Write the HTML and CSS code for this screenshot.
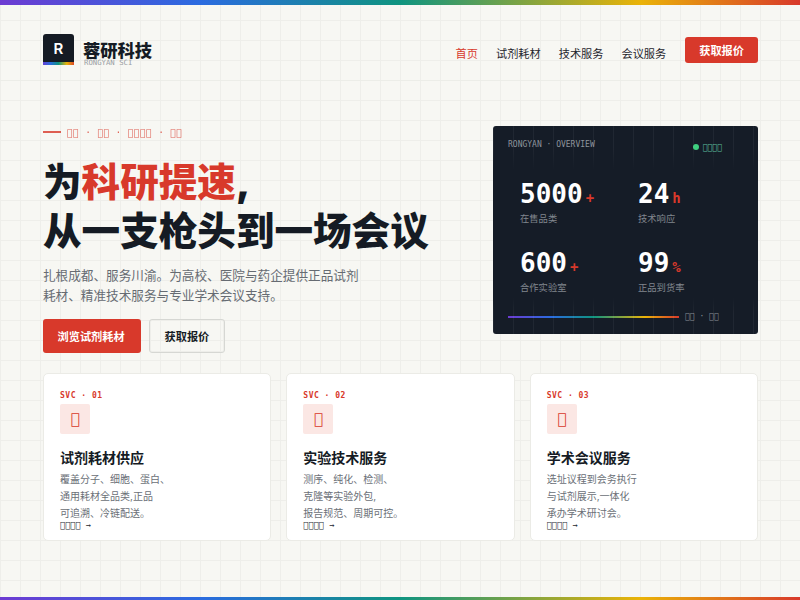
FILE: index.html
```html
<!DOCTYPE html>
<html lang="zh-CN">

<head>
    <meta charset="UTF-8">
    <meta name="viewport" content="width=device-width, initial-scale=1.0">
    <title>蓉研科技</title>
    <link rel="stylesheet" href="styles.css">
</head>

<body>
    <div class="topbar"></div>
    <header class="header">
        <div class="brand">
            <div class="logo"><span>R</span></div>
            <div class="brandtext">
                <div class="brandname">蓉研科技</div>
                <div class="brandsub">RONGYAN SCI</div>
            </div>
        </div>
        <nav class="nav">
            <a class="navlink active">首页</a>
            <a class="navlink">试剂耗材</a>
            <a class="navlink">技术服务</a>
            <a class="navlink">会议服务</a>
            <a class="navbtn">获取报价</a>
        </nav>
    </header>

    <section class="hero">
        <div class="heroleft">
            <div class="eyebrow"><span class="eyebrowline"></span><span>&#xE000;&#xE000; · &#xE000;&#xE000; · &#xE000;&#xE000;&#xE000;&#xE000; · &#xE000;&#xE000;</span></div>
            <h1 class="title">为<em>科研提速</em>,<br>从一支枪头到一场会议</h1>
            <p class="lead">扎根成都、服务川渝。为高校、医院与药企提供正品试剂<br>耗材、精准技术服务与专业学术会议支持。</p>
            <div class="actions">
                <a class="btn btnprimary">浏览试剂耗材</a>
                <a class="btn btnghost">获取报价</a>
            </div>
        </div>
        <aside class="panel">
            <div class="panelhead">
                <span class="paneltitle">RONGYAN · OVERVIEW</span>
                <span class="panelstatus"><i class="statusdot"></i><span class="statustext">&#xE000;&#xE000;&#xE000;&#xE000;</span></span>
            </div>
            <div class="stats">
                <div class="stat">
                    <div class="statnum">5000<small>+</small></div>
                    <div class="statlabel">在售品类</div>
                </div>
                <div class="stat">
                    <div class="statnum">24<small>h</small></div>
                    <div class="statlabel">技术响应</div>
                </div>
                <div class="stat">
                    <div class="statnum">600<small>+</small></div>
                    <div class="statlabel">合作实验室</div>
                </div>
                <div class="stat">
                    <div class="statnum">99<small>%</small></div>
                    <div class="statlabel">正品到货率</div>
                </div>
            </div>
            <div class="panelfoot">
                <span class="rainbowline"></span>
                <span class="footnote">&#xE000;&#xE000; · &#xE000;&#xE000;</span>
            </div>
        </aside>
    </section>

    <section class="cards">
        <div class="card">
            <div class="svc">SVC · 01</div>
            <div class="cardicon">&#xE000;</div>
            <h3 class="cardtitle">试剂耗材供应</h3>
            <p class="carddesc">覆盖分子、细胞、蛋白、<br>通用耗材全品类,正品<br>可追溯、冷链配送。</p>
            <a class="cardlink">&#xE000;&#xE000;&#xE000;&#xE000; →</a>
        </div>
        <div class="card">
            <div class="svc">SVC · 02</div>
            <div class="cardicon">&#xE000;</div>
            <h3 class="cardtitle">实验技术服务</h3>
            <p class="carddesc">测序、纯化、检测、<br>克隆等实验外包,<br>报告规范、周期可控。</p>
            <a class="cardlink">&#xE000;&#xE000;&#xE000;&#xE000; →</a>
        </div>
        <div class="card">
            <div class="svc">SVC · 03</div>
            <div class="cardicon">&#xE000;</div>
            <h3 class="cardtitle">学术会议服务</h3>
            <p class="carddesc">选址议程到会务执行<br>与试剂展示,一体化<br>承办学术研讨会。</p>
            <a class="cardlink">&#xE000;&#xE000;&#xE000;&#xE000; →</a>
        </div>
    </section>
    <div class="bottombar"></div>
</body>

</html>
```

FILE: styles.css
```css
* {
    margin: 0;
    padding: 0;
    box-sizing: border-box;
}

body {
    width: 800px;
    height: 600px;
    overflow: hidden;
    display: flex;
    flex-direction: column;
    font-family: "Inter", "Noto Sans CJK SC", sans-serif;
    color: #151b24;
    background-color: #f7f7f3;
    background-image: linear-gradient(#eeeeea 1px, transparent 1px), linear-gradient(90deg, #eeeeea 1px, transparent 1px);
    background-size: 20px 20px;
}

.topbar,
.bottombar,
.rainbowline {
    background-image: linear-gradient(90deg, #6d3bd2, #2b6be0 25%, #0f9480 50%, #eab308 80%, #d8392b);
}

.topbar {
    height: 5px;
}

.bottombar {
    height: 3px;
    margin-top: auto;
}

.header {
    height: 76px;
    padding: 14px 42px 0 43px;
    display: flex;
    justify-content: space-between;
    align-items: center;
    border-bottom: 1px solid #ecede8;
}

.brand {
    display: flex;
    align-items: center;
    gap: 9px;
}

.logo {
    width: 31px;
    height: 31px;
    border-radius: 3px 3px 0 0;
    display: flex;
    justify-content: center;
    align-items: center;
    color: #fff;
    font-size: 15px;
    font-weight: 600;
    background-color: #151b24;
    border-bottom: 3px solid;
    border-image: linear-gradient(90deg, #6d3bd2, #2b6be0, #0f9480, #eab308, #d8392b) 1;
}

.brandtext {
    height: 31px;
    padding-top: 6px;
}

.brandname {
    font-size: 17.3px;
    font-weight: 800;
    line-height: 22px;
}

.brandsub {
    margin-top: -3px;
    margin-left: 1px;
    font-family: "DejaVu Sans Mono", monospace;
    font-size: 7.3px;
    line-height: 8px;
    color: #9a9ea3;
}

.nav {
    display: flex;
    align-items: center;
    gap: 18px;
    font-size: 11.2px;
}

.navlink {
    padding-top: 6px;
    color: #1f252d;
    font-weight: 400;
}

.navlink.active {
    color: #d8392b;
}

.navbtn {
    margin-left: 1px;
    padding: 0 14px;
    height: 26px;
    line-height: 28px;
    border-radius: 3px;
    color: #fff;
    font-weight: 700;
    background-color: #d8392b;
}

.hero {
    padding: 45px 42px 0 43px;
    display: flex;
    justify-content: space-between;
}

.heroleft {
    width: 420px;
}

.eyebrow {
    display: flex;
    align-items: center;
    gap: 6px;
    height: 12px;
    font-family: "DejaVu Sans Mono", monospace;
    font-size: 9.6px;
    letter-spacing: .3px;
    color: #d8392b;
    opacity: .8;
}

.eyebrowline {
    width: 18px;
    height: 2px;
    background-color: #d8392b;
}

.title {
    margin-top: 20px;
    font-size: 38.6px;
    font-weight: 900;
    line-height: 49px;
    white-space: nowrap;
}

.title em {
    font-style: normal;
    color: #d8392b;
}

.lead {
    margin-top: 10px;
    font-size: 12.64px;
    line-height: 20px;
    color: #666b72;
    white-space: nowrap;
}

.actions {
    margin-top: 13px;
    display: flex;
    gap: 8px;
}

.btn {
    height: 34px;
    border-radius: 3px;
    display: flex;
    align-items: center;
    font-size: 11.2px;
    font-weight: 700;
}

.btnprimary {
    padding: 0 14.5px;
    width: 98px;
    color: #fff;
    background-color: #d8392b;
}

.btnghost {
    padding: 0 14.5px;
    border: 1px solid #d6d7d3;
    box-shadow: inset 0 0 0 1px #eeeeea;
}

.panel {
    position: relative;
    width: 265px;
    height: 208px;
    padding: 14px 15px 0;
    border-radius: 3px;
    color: #fff;
    background-color: #151c27;
}

.panel::before {
    content: "";
    position: absolute;
    inset: 0;
    background-image: linear-gradient(90deg, rgba(255, 255, 255, .05) 1px, transparent 1px);
    background-size: 20px 20px;
    -webkit-mask-image: linear-gradient(#000 10%, transparent 22%, transparent 82%, #000 90%);
    mask-image: linear-gradient(#000 10%, transparent 22%, transparent 82%, #000 90%);
}

.panelhead {
    display: flex;
    justify-content: space-between;
    padding-right: 21px;
    font-family: "DejaVu Sans Mono", monospace;
    font-size: 8px;
    line-height: 10px;
}

.paneltitle {
    color: #8d939b;
}

.panelstatus {
    display: flex;
    align-items: center;
    gap: 4px;
    color: #5fc0a0;
}

.statustext {
    padding-top: 3px;
}

.statusdot {
    width: 6px;
    height: 6px;
    border-radius: 50%;
    background-color: #3ecf7f;
}

.stats {
    margin-top: 26px;
    padding-left: 12px;
    display: grid;
    grid-template-columns: 118px 1fr;
    row-gap: 22px;
}

.statnum {
    font-family: "DejaVu Sans Mono", monospace;
    font-size: 26px;
    font-weight: 700;
    line-height: 30px;
}

.statnum small {
    margin-left: 3px;
    font-size: 14px;
    color: #d8392b;
}

.statlabel {
    margin-top: -1px;
    font-size: 9.3px;
    line-height: 14px;
    color: #80868e;
}

.panelfoot {
    margin-top: 17px;
    display: flex;
    align-items: center;
    gap: 6px;
}

.rainbowline {
    width: 171px;
    height: 2px;
}

.footnote {
    font-family: "DejaVu Sans Mono", monospace;
    font-size: 8px;
    color: #8d939b;
}

.cards {
    margin-top: 20px;
    padding: 0 42px 0 43px;
    display: grid;
    grid-template-columns: repeat(3, 1fr);
    gap: 15px;
}

.card {
    height: 168px;
    padding: 17px 16px 0;
    border: 1px solid #ebebe6;
    border-radius: 5px;
    background-color: #fff;
}

.svc {
    font-family: "DejaVu Sans Mono", monospace;
    font-size: 8px;
    font-weight: 700;
    line-height: 10px;
    letter-spacing: .5px;
    color: #d8392b;
}

.cardicon {
    margin-top: 3px;
    width: 30px;
    height: 30px;
    border-radius: 2px;
    display: flex;
    justify-content: center;
    align-items: center;
    font-family: "DejaVu Sans Mono", monospace;
    font-size: 15px;
    color: #d8392b;
    background-color: #fbe7e4;
}

.cardtitle {
    margin-top: 14px;
    font-size: 14px;
    font-weight: 700;
    line-height: 20px;
}

.carddesc {
    margin-top: 3px;
    font-size: 10px;
    line-height: 17px;
    color: #6b7077;
}

.cardlink {
    display: block;
    margin-top: -2px;
    font-family: "DejaVu Sans Mono", monospace;
    font-size: 8.6px;
    line-height: 10px;
    color: #232830;
}
```
